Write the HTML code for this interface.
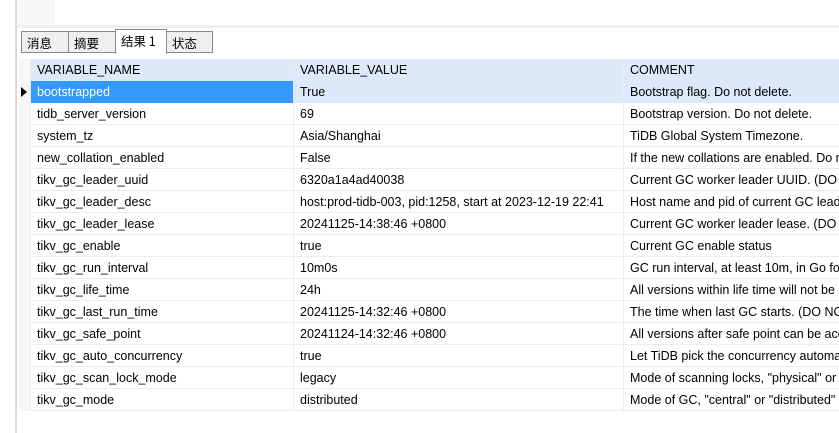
<!DOCTYPE html>
<html><head><meta charset="utf-8"><style>
*{margin:0;padding:0;box-sizing:border-box}
html,body{width:839px;height:433px;overflow:hidden}
body{background:#fff;font-family:"Liberation Sans","Noto Sans CJK SC",sans-serif;font-size:12.5px;color:#000;position:relative}
.vl{position:absolute;left:15px;top:0;width:2px;height:433px;background:#d8d8d8}
.topg{position:absolute;left:17px;top:0;width:38px;height:25px;background:#f7f7f7}
.band{position:absolute;left:17px;top:25px;width:822px;height:3px;background:#f0f0f0}
.tab{position:absolute;top:31px;height:22px;border:1px solid #8a8a8a;background:#efefef;font-size:12.5px;padding:3px 0 0 5px;font-family:"Noto Sans CJK SC",sans-serif;line-height:15px}
.tab.a{top:29px;height:25px;background:#fff;border-bottom:none;padding-top:3px}
.grid{position:absolute;left:19px;top:59px;width:820px;height:360px;overflow:hidden}
.row{position:absolute;left:0;height:22px;width:820px;border-bottom:1px solid #ececec}
.c{position:absolute;top:0;height:22px;line-height:22px;padding-left:6px;white-space:nowrap;overflow:hidden;border-right:1px solid #ececec}
.rh{left:0;width:12px;padding:0;background:#f7f7f7}
.c1{left:12px;width:263px}
.c2{left:275px;width:330px}
.c3{left:605px;width:215px;border-right:none}
.hd .c{background:#dde9f8}
.hd .rh{background:#f7f7f7}
.sel .c{background:#dce9f8}
.sel .c1{background:#3399ff;color:#fff}
.tri{position:absolute;left:2px;top:6px;width:0;height:0;border-top:5px solid transparent;border-bottom:5px solid transparent;border-left:6px solid #000}
</style></head><body>
<div class="vl"></div><div class="topg"></div><div class="band"></div>
<div class="tab" style="left:21px;width:48px">消息</div>
<div class="tab" style="left:68px;width:48px">摘要</div>
<div class="tab a" style="left:115px;width:52px">结果 1</div>
<div class="tab" style="left:166px;width:47px">状态</div>
<div class="grid">
<div class="row hd" style="top:0"><div class="c rh"></div><div class="c c1">VARIABLE_NAME</div><div class="c c2">VARIABLE_VALUE</div><div class="c c3">COMMENT</div></div>
<div class="row sel" style="top:22px"><div class="c rh" style="background:#f7f7f7"><div class="tri"></div></div><div class="c c1">bootstrapped</div><div class="c c2">True</div><div class="c c3">Bootstrap flag. Do not delete.</div></div>
<div class="row" style="top:44px"><div class="c rh"></div><div class="c c1">tidb_server_version</div><div class="c c2">69</div><div class="c c3">Bootstrap version. Do not delete.</div></div>
<div class="row" style="top:66px"><div class="c rh"></div><div class="c c1">system_tz</div><div class="c c2">Asia/Shanghai</div><div class="c c3">TiDB Global System Timezone.</div></div>
<div class="row" style="top:88px"><div class="c rh"></div><div class="c c1">new_collation_enabled</div><div class="c c2">False</div><div class="c c3">If the new collations are enabled. Do not edit it.</div></div>
<div class="row" style="top:110px"><div class="c rh"></div><div class="c c1">tikv_gc_leader_uuid</div><div class="c c2">6320a1a4ad40038</div><div class="c c3">Current GC worker leader UUID. (DO NOT EDIT)</div></div>
<div class="row" style="top:132px"><div class="c rh"></div><div class="c c1">tikv_gc_leader_desc</div><div class="c c2">host:prod-tidb-003, pid:1258, start at 2023-12-19 22:41</div><div class="c c3">Host name and pid of current GC leader.</div></div>
<div class="row" style="top:154px"><div class="c rh"></div><div class="c c1">tikv_gc_leader_lease</div><div class="c c2">20241125-14:38:46 +0800</div><div class="c c3">Current GC worker leader lease. (DO NOT EDIT)</div></div>
<div class="row" style="top:176px"><div class="c rh"></div><div class="c c1">tikv_gc_enable</div><div class="c c2">true</div><div class="c c3">Current GC enable status</div></div>
<div class="row" style="top:198px"><div class="c rh"></div><div class="c c1">tikv_gc_run_interval</div><div class="c c2">10m0s</div><div class="c c3">GC run interval, at least 10m, in Go format.</div></div>
<div class="row" style="top:220px"><div class="c rh"></div><div class="c c1">tikv_gc_life_time</div><div class="c c2">24h</div><div class="c c3">All versions within life time will not be collected by GC</div></div>
<div class="row" style="top:242px"><div class="c rh"></div><div class="c c1">tikv_gc_last_run_time</div><div class="c c2">20241125-14:32:46 +0800</div><div class="c c3">The time when last GC starts. (DO NOT EDIT)</div></div>
<div class="row" style="top:264px"><div class="c rh"></div><div class="c c1">tikv_gc_safe_point</div><div class="c c2">20241124-14:32:46 +0800</div><div class="c c3">All versions after safe point can be accessed.</div></div>
<div class="row" style="top:286px"><div class="c rh"></div><div class="c c1">tikv_gc_auto_concurrency</div><div class="c c2">true</div><div class="c c3">Let TiDB pick the concurrency automatically.</div></div>
<div class="row" style="top:308px"><div class="c rh"></div><div class="c c1">tikv_gc_scan_lock_mode</div><div class="c c2">legacy</div><div class="c c3">Mode of scanning locks, "physical" or "legacy"</div></div>
<div class="row" style="top:330px"><div class="c rh"></div><div class="c c1">tikv_gc_mode</div><div class="c c2">distributed</div><div class="c c3">Mode of GC, "central" or "distributed"</div></div>
</div>
</body></html>
